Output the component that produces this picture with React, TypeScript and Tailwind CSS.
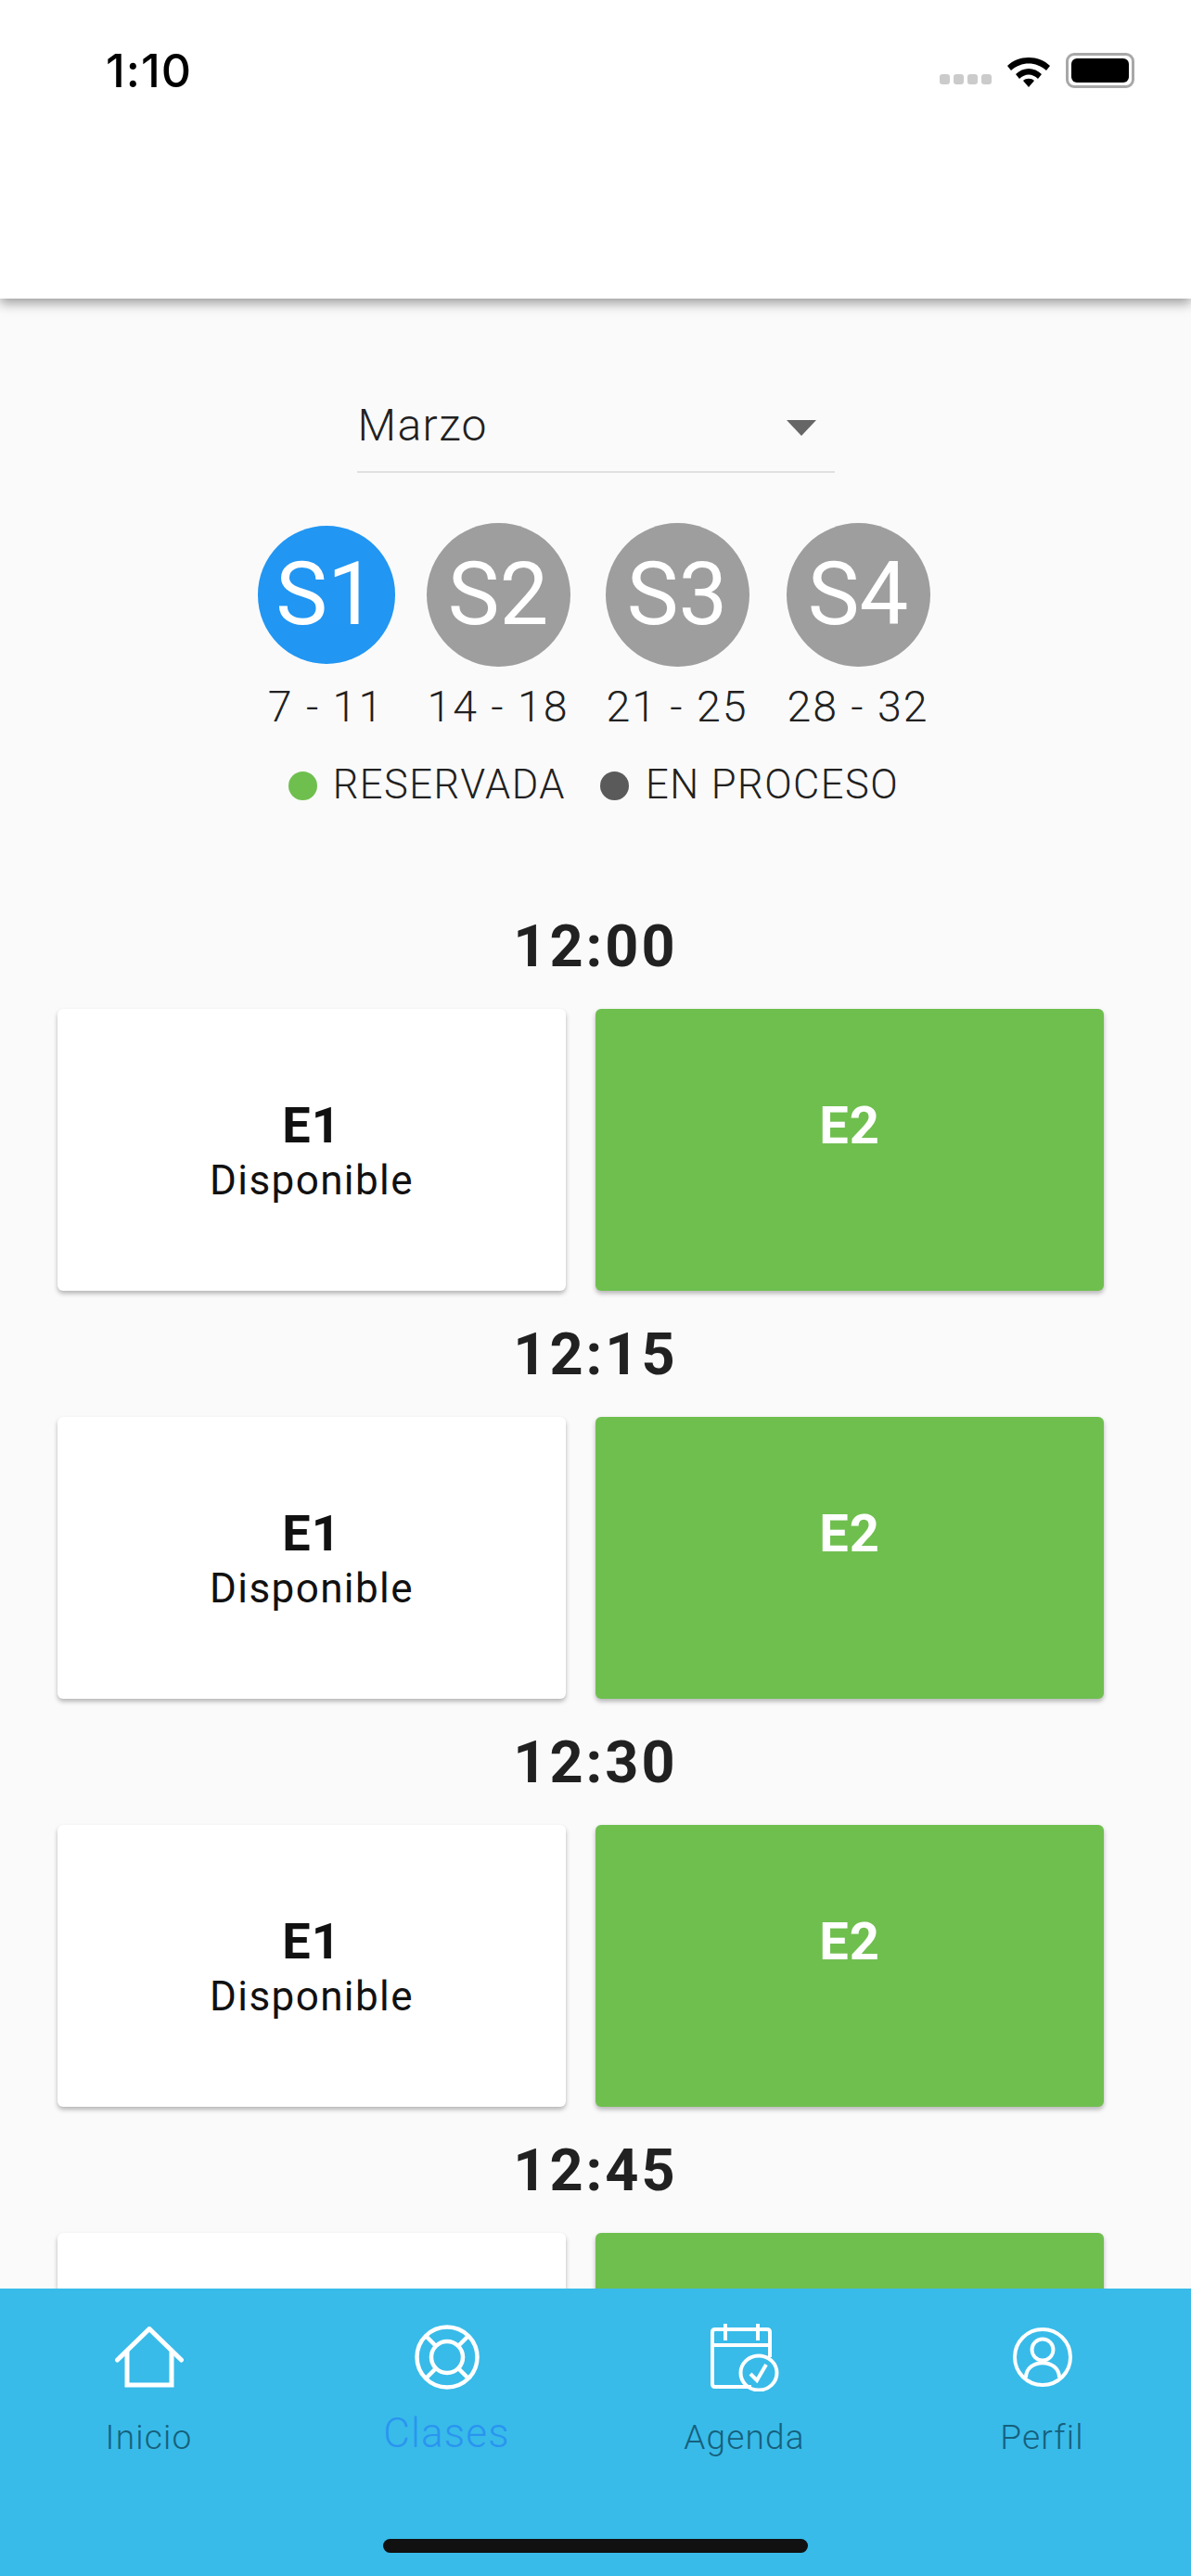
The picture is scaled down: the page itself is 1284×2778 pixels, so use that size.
import React from "react";

const font = { fontFamily: "Roboto, 'Liberation Sans', sans-serif" };

function Wifi() {
  return (
    <svg width="50" height="36" viewBox="0 0 50 36" className="block">
      <path d="M2 12 C14 0 36 0 48 12 L44 17 C33 7 17 7 6 17 Z" fill="#000" />
      <path d="M11 21 C19 13 31 13 39 21 L35 26 C29 20 21 20 15 26 Z" fill="#000" />
      <path d="M19 28 C22 25 28 25 31 28 L25 35 Z" fill="#000" />
    </svg>
  );
}

function Home() {
  return (
    <svg width="74" height="66" viewBox="0 0 74 66" fill="none" stroke="#fff" strokeWidth="5" className="block">
      <path d="M2.5 36 L37 2.5 L71.5 36" strokeLinecap="round" strokeLinejoin="miter" />
      <path d="M13 25 V63 H61 V25" />
    </svg>
  );
}

function Ring() {
  return (
    <svg width="70" height="70" viewBox="0 0 70 70" fill="none" stroke="#fff" strokeWidth="4.5" className="block">
      <circle cx="35" cy="35" r="32.5" />
      <circle cx="35" cy="35" r="17" />
      <path d="M12 12 L23 23 M58 12 L47 23 M12 58 L23 47 M58 58 L47 47" />
    </svg>
  );
}

function CalendarCheck() {
  return (
    <svg width="74" height="74" viewBox="0 0 74 74" fill="none" stroke="#fff" strokeWidth="4" className="block">
      <path d="M44 69 H5 Q2 69 2 66 V10 Q2 7 5 7 H61 Q64 7 64 10 V37" />
      <path d="M2 24 H64" />
      <path d="M16 1 V19 M51 1 V19" />
      <ellipse cx="52" cy="54" rx="19.5" ry="18.5" />
      <path d="M43 55 L50 62 L60 45" />
    </svg>
  );
}

function Person() {
  return (
    <svg width="64" height="64" viewBox="0 0 64 64" fill="none" stroke="#fff" strokeWidth="4" className="block">
      <circle cx="32" cy="32" r="30" />
      <circle cx="32" cy="24" r="11.5" />
      <path d="M14 54 C14 33 50 33 50 54" />
    </svg>
  );
}

function Slot({ time, empty }: { time: string; empty?: boolean }) {
  return (
    <div className="flex flex-col items-center shrink-0 w-[1284px]">
      <div className="h-[103px] shrink-0 pt-[2px] leading-[64px] text-[63px] font-bold tracking-[3px] text-[#212121]">{time}</div>
      <div className="flex gap-[32px] self-start ml-[62px] mt-[-2px]">
        <div className="w-[548px] h-[304px] rounded-[6px] bg-white shadow-[0_3px_5px_rgba(0,0,0,0.28)] flex flex-col items-center pt-[95px]">
          {!empty && <div className="text-[54px] leading-[62px] font-bold tracking-[1px] text-[#111]">E1</div>}
          {!empty && <div className="text-[44px] leading-[52px] tracking-[1.4px] text-[#111] mt-[2px]">Disponible</div>}
        </div>
        <div className="w-[548px] h-[304px] rounded-[6px] bg-[#6fbf4f] shadow-[0_3px_5px_rgba(0,0,0,0.28)] flex flex-col items-center pt-[95px]">
          {!empty && <div className="text-[56px] leading-[62px] font-bold tracking-[1px] text-white">E2</div>}
        </div>
      </div>
    </div>
  );
}

function Week({ label, range, cls, circle }: { label: string; range: string; cls: string; circle: string }) {
  return (
    <div className={`flex flex-col items-center ${cls}`}>
      <div className="h-[155px] flex items-center">
        <div className={`rounded-full flex items-center justify-center text-white text-[94px] font-normal ${circle}`}>{label}</div>
      </div>
      <div className="mt-[15px] text-[46.5px] leading-[56px] font-light tracking-[2px] text-[#212121] whitespace-nowrap">{range}</div>
    </div>
  );
}

function Tab({ label, icon, active }: { label: string; icon: React.ReactNode; active?: boolean }) {
  return (
    <div className="flex flex-col items-center">
      <div className="h-[74px] flex items-center">{icon}</div>
      <div
        className={
          active
            ? "mt-[21px] text-[44px] leading-[48px] tracking-[1.2px] text-[#2a94f0] font-light"
            : "mt-[27px] text-[37px] leading-[46px] tracking-[1.2px] text-[#16607c] font-light"
        }
      >
        {label}
      </div>
    </div>
  );
}

export default function App() {
  return (
    <div className="w-[1284px] h-[2778px] flex flex-col overflow-hidden bg-[#fafafa]" style={font}>
      <header className="relative z-10 h-[322px] shrink-0 bg-white shadow-[0_5px_12px_rgba(0,0,0,0.38)]">
        <div className="flex items-start justify-between pl-[114px] pr-[61px] pt-[47px]">
          <div className="text-[50px] leading-[58px] font-medium tracking-[1px] text-black" style={{ fontFamily: "Inter, Roboto, sans-serif" }}>1:10</div>
          <div className="flex items-end gap-[15px] mt-[10px]">
            <div className="flex gap-[4px] mb-[4px]">
              <div className="w-[11px] h-[11px] rounded-[3px] bg-[#cbcbcb]" />
              <div className="w-[11px] h-[11px] rounded-[3px] bg-[#cbcbcb]" />
              <div className="w-[11px] h-[11px] rounded-[3px] bg-[#cbcbcb]" />
              <div className="w-[11px] h-[11px] rounded-[3px] bg-[#cbcbcb]" />
            </div>
            <Wifi />
            <div className="w-[74px] h-[38px] rounded-[9px] border-[3px] border-[#a8a8a8] p-[3px]">
              <div className="w-full h-full rounded-[6px] bg-black" />
            </div>
          </div>
        </div>
      </header>

      <main className="flex-1 min-h-0 overflow-hidden flex flex-col items-center">
        <div className="mt-[105px] w-[515px] h-[83px] shrink-0 border-b-2 border-[#e0e0e0] flex justify-between pl-[1px] pr-[20px]">
          <span className="text-[48px] leading-[64px] tracking-[1.4px] font-light text-[#212121]">Marzo</span>
          <svg width="32" height="18" viewBox="0 0 32 18" className="mt-[26px]">
            <path d="M0 0 H32 L16 17 Z" fill="#666" />
          </svg>
        </div>

        <div className="mt-[54px] flex shrink-0 pr-[4px]">
          <Week label="S1" range="7 - 11" cls="w-[148px]" circle="w-[148px] h-[149px] bg-[#2196f3]" />
          <Week label="S2" range="14 - 18" cls="w-[155px] ml-[34px]" circle="w-[155px] h-[155px] bg-[#9e9e9e]" />
          <Week label="S3" range="21 - 25" cls="w-[155px] ml-[38px]" circle="w-[155px] h-[155px] bg-[#9e9e9e]" />
          <Week label="S4" range="28 - 32" cls="w-[155px] ml-[40px]" circle="w-[155px] h-[155px] bg-[#9e9e9e]" />
        </div>

        <div className="mt-[31px] flex shrink-0 items-center pr-[4px] text-[43.5px] leading-[52px] font-light tracking-[1.5px] text-[#212121]">
          <span className="w-[31px] h-[31px] rounded-full bg-[#6fbf4f] mr-[17px]" />
          <span>RESERVADA</span>
          <span className="w-[31px] h-[31px] rounded-full bg-[#5a5a5a] ml-[37px] mr-[18px]" />
          <span>EN PROCESO</span>
        </div>

        <div className="mt-[114px] flex shrink-0 flex-col gap-[35px]">
          <Slot time="12:00" />
          <Slot time="12:15" />
          <Slot time="12:30" />
          <Slot time="12:45" empty />
        </div>
      </main>

      <footer className="relative h-[310px] shrink-0 bg-[#38bbe9]">
        <div className="grid grid-cols-4 pt-[37px]">
          <Tab label="Inicio" icon={<Home />} />
          <Tab label="Clases" icon={<Ring />} active />
          <Tab label="Agenda" icon={<CalendarCheck />} />
          <Tab label="Perfil" icon={<Person />} />
        </div>
        <div className="absolute left-[413px] top-[270px] w-[458px] h-[15px] rounded-full bg-[#111]" />
      </footer>
    </div>
  );
}
